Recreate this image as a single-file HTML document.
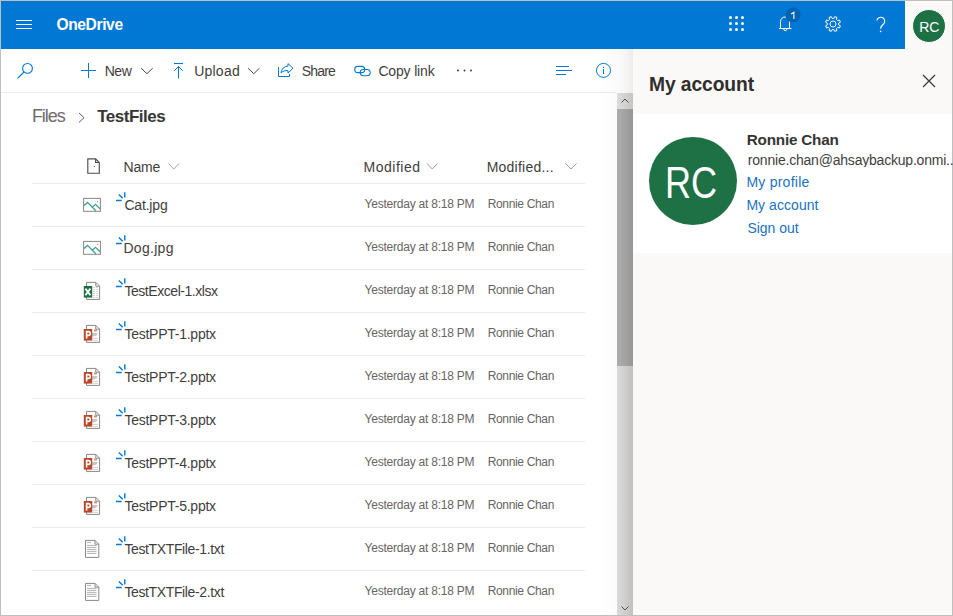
<!DOCTYPE html>
<html><head><meta charset="utf-8">
<style>
html,body{margin:0;padding:0;}
body{width:953px;height:616px;overflow:hidden;position:relative;background:#fff;font-family:"Liberation Sans",sans-serif;}
.t{position:absolute;white-space:nowrap;}
.a{position:absolute;}
svg{position:absolute;overflow:visible;}
</style></head><body>
<div class=a style="left:0;top:0;width:905px;height:49px;background:#0078d4"></div>
<div class=a style="left:905px;top:0;width:48px;height:49px;background:#faf9f8"></div>
<div class=a style="left:0;top:92px;width:617px;height:1px;background:#edebe9"></div>
<div class=a style="left:32px;top:183px;width:553px;height:1px;background:#edebe9"></div>
<div class=a style="left:32px;top:226px;width:553px;height:1px;background:#edebe9"></div>
<div class=a style="left:32px;top:269px;width:553px;height:1px;background:#edebe9"></div>
<div class=a style="left:32px;top:312px;width:553px;height:1px;background:#edebe9"></div>
<div class=a style="left:32px;top:355px;width:553px;height:1px;background:#edebe9"></div>
<div class=a style="left:32px;top:398px;width:553px;height:1px;background:#edebe9"></div>
<div class=a style="left:32px;top:441px;width:553px;height:1px;background:#edebe9"></div>
<div class=a style="left:32px;top:484px;width:553px;height:1px;background:#edebe9"></div>
<div class=a style="left:32px;top:527px;width:553px;height:1px;background:#edebe9"></div>
<div class=a style="left:32px;top:570px;width:553px;height:1px;background:#edebe9"></div>
<div class=a style="left:617px;top:93px;width:16px;height:523px;background:linear-gradient(90deg,#dedede,#cfcfcf)"></div>
<div class=a style="left:617px;top:93px;width:16px;height:16px;background:linear-gradient(90deg,#e0e0e0,#d3d3d3)"></div>
<div class=a style="left:617px;top:109px;width:16px;height:257px;background:linear-gradient(90deg,#b0b0b0,#a2a2a2)"></div>
<div class=a style="left:599px;top:49px;width:34px;height:567px;background:linear-gradient(90deg,rgba(0,0,0,0),rgba(0,0,0,0.015) 50%,rgba(0,0,0,0.04) 80%,rgba(0,0,0,0.075))"></div>
<div class=a style="left:633px;top:49px;width:320px;height:567px;background:#faf9f8"></div>
<div class=a style="left:633px;top:114px;width:320px;height:139px;background:#fff"></div>
<div class=a style="left:649px;top:137px;width:88px;height:88px;border-radius:50%;background:#1e7145"></div>
<div class=a style="left:912px;top:9px;width:32px;height:32px;border-radius:50%;background:#1e7145;border:1px solid #fff"></div>
<svg width="953" height="616" style="left:0;top:0"><line x1="16" y1="20.5" x2="32" y2="20.5" stroke="#fff" stroke-width="1"/>
<line x1="16" y1="24.5" x2="32" y2="24.5" stroke="#fff" stroke-width="1"/>
<line x1="16" y1="28.5" x2="32" y2="28.5" stroke="#fff" stroke-width="1"/>
<circle cx="730.5" cy="17.5" r="1.5" fill="#fff"/>
<circle cx="730.5" cy="23.5" r="1.5" fill="#fff"/>
<circle cx="730.5" cy="29.5" r="1.5" fill="#fff"/>
<circle cx="736.5" cy="17.5" r="1.5" fill="#fff"/>
<circle cx="736.5" cy="23.5" r="1.5" fill="#fff"/>
<circle cx="736.5" cy="29.5" r="1.5" fill="#fff"/>
<circle cx="742.5" cy="17.5" r="1.5" fill="#fff"/>
<circle cx="742.5" cy="23.5" r="1.5" fill="#fff"/>
<circle cx="742.5" cy="29.5" r="1.5" fill="#fff"/>
<path d="M780.5,28.5 V21.5 A4.5,4.5 0 0 1 789.5,21.5 V28.5" fill="none" stroke="#fff" stroke-width="1"/>
<line x1="779" y1="28.5" x2="791.5" y2="28.5" stroke="#fff" stroke-width="1"/>
<path d="M783.7,29 A1.6,1.6 0 0 0 786.9,29" fill="none" stroke="#fff" stroke-width="1"/>
<circle cx="793" cy="15" r="7.6" fill="#0063b1"/>
<path d="M791.2,14 L793.9,12.3 V19.1" fill="none" stroke="#fff" stroke-width="1.1"/>
<path d="M833.85,18.36 L834.78,16.61 L836.97,17.52 L836.39,19.42 L837.58,20.61 L839.48,20.03 L840.39,22.22 L838.64,23.15 L838.64,24.85 L840.39,25.78 L839.48,27.97 L837.58,27.39 L836.39,28.58 L836.97,30.48 L834.78,31.39 L833.85,29.64 L832.15,29.64 L831.22,31.39 L829.03,30.48 L829.61,28.58 L828.42,27.39 L826.52,27.97 L825.61,25.78 L827.36,24.85 L827.36,23.15 L825.61,22.22 L826.52,20.03 L828.42,20.61 L829.61,19.42 L829.03,17.52 L831.22,16.61 L832.15,18.36Z" fill="none" stroke="#fff" stroke-width="1"/>
<circle cx="833" cy="24" r="3" fill="none" stroke="#fff" stroke-width="1"/>
<path d="M876.8,20.5 A4,4 0 1 1 883.8,23.8 C881.5,25.5 880.6,26.3 880.6,28.8" fill="none" stroke="#fff" stroke-width="1.1"/>
<circle cx="880.6" cy="31.4" r="0.8" fill="#fff"/>
<circle cx="27.5" cy="68.4" r="4.9" fill="none" stroke="#0078d4" stroke-width="1.1"/>
<line x1="17.6" y1="78.4" x2="24" y2="72" stroke="#0078d4" stroke-width="1.1"/>
<path d="M81,70.5 H96 M88.5,63 V78" stroke="#0078d4" stroke-width="1"/>
<path d="M141.2,68.2 L146.95,73.7 L152.7,68.2" fill="none" stroke="#484644" stroke-width="1"/>
<path d="M248,68.2 L253.75,73.7 L259.5,68.2" fill="none" stroke="#484644" stroke-width="1"/>
<path d="M174,63.5 H183 M178.5,66.5 V78.5 M174.3,70.7 L178.5,66.5 L182.7,70.7" fill="none" stroke="#0078d4" stroke-width="1"/>
<path d="M278.5,67 V76.5 H289.5 V74" fill="none" stroke="#0078d4" stroke-width="1"/>
<path d="M288,63.6 L293,68.3 L288,73.1 V70.6 C285,70.4 282.8,71.2 281,72.8 C281.5,69 284,66.3 288,66 Z" fill="none" stroke="#0078d4" stroke-width="1" stroke-linejoin="round"/>
<rect x="354.7" y="66.4" width="10" height="6.2" rx="3.1" fill="none" stroke="#0078d4" stroke-width="1.1"/>
<rect x="360.2" y="69.5" width="10" height="6.2" rx="3.1" fill="none" stroke="#0078d4" stroke-width="1.1"/>
<circle cx="458" cy="70.5" r="0.9" fill="#323130"/>
<circle cx="464.5" cy="70.5" r="0.9" fill="#323130"/>
<circle cx="471" cy="70.5" r="0.9" fill="#323130"/>
<path d="M556,66.5 H569 M556,70.5 H572 M556,74.5 H566" stroke="#0078d4" stroke-width="1"/>
<circle cx="603.5" cy="70.4" r="7" fill="none" stroke="#0078d4" stroke-width="1"/>
<circle cx="603.5" cy="67.2" r="0.7" fill="#0078d4"/>
<line x1="603.5" y1="68.9" x2="603.5" y2="74" stroke="#0078d4" stroke-width="1"/>
<path d="M79,113 L84,117.7 L79,122.4" fill="none" stroke="#605e5c" stroke-width="1"/>
<path d="M87.8,158.8 H95.6 L99.3,162.5 V173.2 H87.8 Z M95.6,158.8 V162.5 H99.3" fill="none" stroke="#504e4c" stroke-width="1.15"/>
<circle cx="94.4" cy="166.5" r="0.6" fill="#605e5c"/>
<path d="M168.5,163.5 L173.75,169.0 L179.0,163.5" fill="none" stroke="#a19f9d" stroke-width="1"/>
<path d="M427,163.5 L432.25,169.0 L437.5,163.5" fill="none" stroke="#a19f9d" stroke-width="1"/>
<path d="M565.5,163.5 L571.0,169.0 L576.5,163.5" fill="none" stroke="#a19f9d" stroke-width="1"/>
<path d="M124.8,192.2 V197.4 M118.8,194.5 L122.7,198.3 M116,200.5 H121.7" stroke="#0078d4" stroke-width="1.4"/>
<rect x="83.6" y="198.4" width="16.8" height="12.9" fill="none" stroke="#8a8886" stroke-width="1"/>
<path d="M84,205.6 L87.5,202.4 L95.8,210.7 M92.6,207 L95.5,204.3 L100,208.8" fill="none" stroke="#3f9f99" stroke-width="1.3"/>
<circle cx="97.5" cy="201.4" r="0.6" fill="#e8825a"/>
<path d="M124.8,235.2 V240.4 M118.8,237.5 L122.7,241.3 M116,243.5 H121.7" stroke="#0078d4" stroke-width="1.4"/>
<rect x="83.6" y="241.4" width="16.8" height="12.9" fill="none" stroke="#8a8886" stroke-width="1"/>
<path d="M84,248.6 L87.5,245.4 L95.8,253.7 M92.6,250 L95.5,247.3 L100,251.8" fill="none" stroke="#3f9f99" stroke-width="1.3"/>
<circle cx="97.5" cy="244.4" r="0.6" fill="#e8825a"/>
<path d="M124.8,278.2 V283.4 M118.8,280.5 L122.7,284.3 M116,286.5 H121.7" stroke="#0078d4" stroke-width="1.4"/>
<path d="M86.5,282.4 H95.8 L99.6,286.2 V299.4 H86.5 Z M95.8,282.4 V286.2 H99.6" fill="#fff" stroke="#8a8886" stroke-width="1"/>
<path d="M93,287.4 H95 M96,287.4 H98 M93,289.4 H95 M96,289.4 H98 M93,291.4 H95 M96,291.4 H98 M93,293.4 H95 M96,293.4 H98 M93,295.4 H95 M96,295.4 H98 M93,297.4 H95 M96,297.4 H98" stroke="#c8c6c4" stroke-width="0.8"/>
<rect x="83.8" y="286.0" width="8.4" height="11.6" fill="#1d6f42"/>
<path d="M85.4,288.59999999999997 L90.4,295.2 M90.4,288.59999999999997 L85.4,295.2" stroke="#fff" stroke-width="1.9"/>
<path d="M124.8,321.2 V326.4 M118.8,323.5 L122.7,327.3 M116,329.5 H121.7" stroke="#0078d4" stroke-width="1.4"/>
<path d="M86.5,325.4 H95.8 L99.6,329.2 V342.4 H86.5 Z M95.8,325.4 V329.2 H99.6" fill="#fff" stroke="#8a8886" stroke-width="1"/>
<path d="M94,329.4 H97 V331.4 H94 Z" fill="#ed8a63"/>
<path d="M92,332.9 H97.5 C97.5,335.4 95,336.4 92,336.4 Z" fill="#c8c6c4"/>
<path d="M92.5,338.4 H98 M92.5,340.4 H98" stroke="#c8c6c4" stroke-width="0.8"/>
<rect x="83.8" y="329.0" width="8.4" height="11.6" fill="#b9472a"/>
<path d="M86.6,338.4 V331.59999999999997 H88.4 A1.9,1.9 0 0 1 88.4,335.4 H86.6" fill="none" stroke="#fff" stroke-width="1.6"/>
<path d="M124.8,364.2 V369.4 M118.8,366.5 L122.7,370.3 M116,372.5 H121.7" stroke="#0078d4" stroke-width="1.4"/>
<path d="M86.5,368.4 H95.8 L99.6,372.2 V385.4 H86.5 Z M95.8,368.4 V372.2 H99.6" fill="#fff" stroke="#8a8886" stroke-width="1"/>
<path d="M94,372.4 H97 V374.4 H94 Z" fill="#ed8a63"/>
<path d="M92,375.9 H97.5 C97.5,378.4 95,379.4 92,379.4 Z" fill="#c8c6c4"/>
<path d="M92.5,381.4 H98 M92.5,383.4 H98" stroke="#c8c6c4" stroke-width="0.8"/>
<rect x="83.8" y="372.0" width="8.4" height="11.6" fill="#b9472a"/>
<path d="M86.6,381.4 V374.59999999999997 H88.4 A1.9,1.9 0 0 1 88.4,378.4 H86.6" fill="none" stroke="#fff" stroke-width="1.6"/>
<path d="M124.8,407.2 V412.4 M118.8,409.5 L122.7,413.3 M116,415.5 H121.7" stroke="#0078d4" stroke-width="1.4"/>
<path d="M86.5,411.4 H95.8 L99.6,415.2 V428.4 H86.5 Z M95.8,411.4 V415.2 H99.6" fill="#fff" stroke="#8a8886" stroke-width="1"/>
<path d="M94,415.4 H97 V417.4 H94 Z" fill="#ed8a63"/>
<path d="M92,418.9 H97.5 C97.5,421.4 95,422.4 92,422.4 Z" fill="#c8c6c4"/>
<path d="M92.5,424.4 H98 M92.5,426.4 H98" stroke="#c8c6c4" stroke-width="0.8"/>
<rect x="83.8" y="415.0" width="8.4" height="11.6" fill="#b9472a"/>
<path d="M86.6,424.4 V417.59999999999997 H88.4 A1.9,1.9 0 0 1 88.4,421.4 H86.6" fill="none" stroke="#fff" stroke-width="1.6"/>
<path d="M124.8,450.2 V455.4 M118.8,452.5 L122.7,456.3 M116,458.5 H121.7" stroke="#0078d4" stroke-width="1.4"/>
<path d="M86.5,454.4 H95.8 L99.6,458.2 V471.4 H86.5 Z M95.8,454.4 V458.2 H99.6" fill="#fff" stroke="#8a8886" stroke-width="1"/>
<path d="M94,458.4 H97 V460.4 H94 Z" fill="#ed8a63"/>
<path d="M92,461.9 H97.5 C97.5,464.4 95,465.4 92,465.4 Z" fill="#c8c6c4"/>
<path d="M92.5,467.4 H98 M92.5,469.4 H98" stroke="#c8c6c4" stroke-width="0.8"/>
<rect x="83.8" y="458.0" width="8.4" height="11.6" fill="#b9472a"/>
<path d="M86.6,467.4 V460.59999999999997 H88.4 A1.9,1.9 0 0 1 88.4,464.4 H86.6" fill="none" stroke="#fff" stroke-width="1.6"/>
<path d="M124.8,493.2 V498.4 M118.8,495.5 L122.7,499.3 M116,501.5 H121.7" stroke="#0078d4" stroke-width="1.4"/>
<path d="M86.5,497.4 H95.8 L99.6,501.2 V514.4 H86.5 Z M95.8,497.4 V501.2 H99.6" fill="#fff" stroke="#8a8886" stroke-width="1"/>
<path d="M94,501.4 H97 V503.4 H94 Z" fill="#ed8a63"/>
<path d="M92,504.9 H97.5 C97.5,507.4 95,508.4 92,508.4 Z" fill="#c8c6c4"/>
<path d="M92.5,510.4 H98 M92.5,512.4 H98" stroke="#c8c6c4" stroke-width="0.8"/>
<rect x="83.8" y="501.0" width="8.4" height="11.6" fill="#b9472a"/>
<path d="M86.6,510.4 V503.59999999999997 H88.4 A1.9,1.9 0 0 1 88.4,507.4 H86.6" fill="none" stroke="#fff" stroke-width="1.6"/>
<path d="M124.8,536.2 V541.4 M118.8,538.5 L122.7,542.3 M116,544.5 H121.7" stroke="#0078d4" stroke-width="1.4"/>
<path d="M85.5,540.4 H95.0 L98.8,544.1999999999999 V557.4 H85.5 Z M95.0,540.4 V544.1999999999999 H98.8" fill="#fff" stroke="#8a8886" stroke-width="1"/>
<path d="M87,542.4 H91 M87,545.4 H96.5 M87,547.4 H96.5 M87,549.4 H96.5 M87,551.4 H96.5 M87,553.4 H96.5" stroke="#a19f9d" stroke-width="0.8"/>
<path d="M124.8,579.2 V584.4 M118.8,581.5 L122.7,585.3 M116,587.5 H121.7" stroke="#0078d4" stroke-width="1.4"/>
<path d="M85.5,583.4 H95.0 L98.8,587.1999999999999 V600.4 H85.5 Z M95.0,583.4 V587.1999999999999 H98.8" fill="#fff" stroke="#8a8886" stroke-width="1"/>
<path d="M87,585.4 H91 M87,588.4 H96.5 M87,590.4 H96.5 M87,592.4 H96.5 M87,594.4 H96.5 M87,596.4 H96.5" stroke="#a19f9d" stroke-width="0.8"/>
<path d="M923,75 L935,87 M935,75 L923,87" stroke="#3b3a39" stroke-width="1.3"/>
<path d="M621.5,102.5 L625,99 L628.5,102.5" fill="none" stroke="#505050" stroke-width="1"/>
<path d="M621.5,606.5 L625,610 L628.5,606.5" fill="none" stroke="#505050" stroke-width="1"/></svg>
<div class=a style="left:0;top:0;width:951px;height:614px;border:1px solid #bfbfbf"></div>
<div class=t style="left:56.40px;top:16.99px;font-size:15.6px;line-height:15.6px;color:#fff;font-weight:700;letter-spacing:-0.380px;">OneDrive</div>
<div class=t style="left:919.20px;top:20.15px;font-size:14px;line-height:14px;color:#fff;">RC</div>
<div class=t style="left:104.70px;top:64.15px;font-size:14px;line-height:14px;color:#3f3e3d;letter-spacing:-0.448px;">New</div>
<div class=t style="left:194.20px;top:64.15px;font-size:14px;line-height:14px;color:#3f3e3d;letter-spacing:0.224px;">Upload</div>
<div class=t style="left:301.70px;top:64.15px;font-size:14px;line-height:14px;color:#3f3e3d;letter-spacing:-0.818px;">Share</div>
<div class=t style="left:378.40px;top:64.15px;font-size:14px;line-height:14px;color:#3f3e3d;letter-spacing:-0.160px;">Copy link</div>
<div class=t style="left:31.90px;top:106.96px;font-size:18px;line-height:18px;color:#6e6c6b;letter-spacing:-1.026px;">Files</div>
<div class=t style="left:97.20px;top:107.71px;font-size:17px;line-height:17px;color:#363534;font-weight:700;letter-spacing:-0.497px;">TestFiles</div>
<div class=t style="left:123.50px;top:160.15px;font-size:14px;line-height:14px;color:#3f3e3d;letter-spacing:-0.153px;">Name</div>
<div class=t style="left:363.60px;top:160.15px;font-size:14px;line-height:14px;color:#3f3e3d;letter-spacing:0.496px;">Modified</div>
<div class=t style="left:486.70px;top:160.15px;font-size:14px;line-height:14px;color:#3f3e3d;letter-spacing:0.230px;">Modified...</div>
<div class=t style="left:124.40px;top:198.15px;font-size:14px;line-height:14px;color:#3f3e3d;letter-spacing:-0.179px;">Cat.jpg</div>
<div class=t style="left:364.60px;top:197.84px;font-size:12px;line-height:12px;color:#676564;letter-spacing:-0.226px;">Yesterday at 8:18 PM</div>
<div class=t style="left:487.70px;top:197.84px;font-size:12px;line-height:12px;color:#676564;letter-spacing:-0.338px;">Ronnie Chan</div>
<div class=t style="left:123.40px;top:241.15px;font-size:14px;line-height:14px;color:#3f3e3d;letter-spacing:0.305px;">Dog.jpg</div>
<div class=t style="left:364.60px;top:240.84px;font-size:12px;line-height:12px;color:#676564;letter-spacing:-0.226px;">Yesterday at 8:18 PM</div>
<div class=t style="left:487.70px;top:240.84px;font-size:12px;line-height:12px;color:#676564;letter-spacing:-0.338px;">Ronnie Chan</div>
<div class=t style="left:124.40px;top:284.15px;font-size:14px;line-height:14px;color:#3f3e3d;letter-spacing:-0.444px;">TestExcel-1.xlsx</div>
<div class=t style="left:364.60px;top:283.84px;font-size:12px;line-height:12px;color:#676564;letter-spacing:-0.226px;">Yesterday at 8:18 PM</div>
<div class=t style="left:487.70px;top:283.84px;font-size:12px;line-height:12px;color:#676564;letter-spacing:-0.338px;">Ronnie Chan</div>
<div class=t style="left:124.40px;top:327.15px;font-size:14px;line-height:14px;color:#3f3e3d;letter-spacing:-0.249px;">TestPPT-1.pptx</div>
<div class=t style="left:364.60px;top:326.84px;font-size:12px;line-height:12px;color:#676564;letter-spacing:-0.226px;">Yesterday at 8:18 PM</div>
<div class=t style="left:487.70px;top:326.84px;font-size:12px;line-height:12px;color:#676564;letter-spacing:-0.338px;">Ronnie Chan</div>
<div class=t style="left:124.40px;top:370.15px;font-size:14px;line-height:14px;color:#3f3e3d;letter-spacing:-0.249px;">TestPPT-2.pptx</div>
<div class=t style="left:364.60px;top:369.84px;font-size:12px;line-height:12px;color:#676564;letter-spacing:-0.226px;">Yesterday at 8:18 PM</div>
<div class=t style="left:487.70px;top:369.84px;font-size:12px;line-height:12px;color:#676564;letter-spacing:-0.338px;">Ronnie Chan</div>
<div class=t style="left:124.40px;top:413.15px;font-size:14px;line-height:14px;color:#3f3e3d;letter-spacing:-0.249px;">TestPPT-3.pptx</div>
<div class=t style="left:364.60px;top:412.84px;font-size:12px;line-height:12px;color:#676564;letter-spacing:-0.226px;">Yesterday at 8:18 PM</div>
<div class=t style="left:487.70px;top:412.84px;font-size:12px;line-height:12px;color:#676564;letter-spacing:-0.338px;">Ronnie Chan</div>
<div class=t style="left:124.40px;top:456.15px;font-size:14px;line-height:14px;color:#3f3e3d;letter-spacing:-0.249px;">TestPPT-4.pptx</div>
<div class=t style="left:364.60px;top:455.84px;font-size:12px;line-height:12px;color:#676564;letter-spacing:-0.226px;">Yesterday at 8:18 PM</div>
<div class=t style="left:487.70px;top:455.84px;font-size:12px;line-height:12px;color:#676564;letter-spacing:-0.338px;">Ronnie Chan</div>
<div class=t style="left:124.40px;top:499.15px;font-size:14px;line-height:14px;color:#3f3e3d;letter-spacing:-0.249px;">TestPPT-5.pptx</div>
<div class=t style="left:364.60px;top:498.84px;font-size:12px;line-height:12px;color:#676564;letter-spacing:-0.226px;">Yesterday at 8:18 PM</div>
<div class=t style="left:487.70px;top:498.84px;font-size:12px;line-height:12px;color:#676564;letter-spacing:-0.338px;">Ronnie Chan</div>
<div class=t style="left:124.40px;top:542.15px;font-size:14px;line-height:14px;color:#3f3e3d;letter-spacing:-0.369px;">TestTXTFile-1.txt</div>
<div class=t style="left:364.60px;top:541.84px;font-size:12px;line-height:12px;color:#676564;letter-spacing:-0.226px;">Yesterday at 8:18 PM</div>
<div class=t style="left:487.70px;top:541.84px;font-size:12px;line-height:12px;color:#676564;letter-spacing:-0.338px;">Ronnie Chan</div>
<div class=t style="left:124.40px;top:585.15px;font-size:14px;line-height:14px;color:#3f3e3d;letter-spacing:-0.369px;">TestTXTFile-2.txt</div>
<div class=t style="left:364.60px;top:584.84px;font-size:12px;line-height:12px;color:#676564;letter-spacing:-0.226px;">Yesterday at 8:18 PM</div>
<div class=t style="left:487.70px;top:584.84px;font-size:12px;line-height:12px;color:#676564;letter-spacing:-0.338px;">Ronnie Chan</div>
<div class=t style="left:649.00px;top:74.66px;font-size:19.3px;line-height:19.3px;color:#2f2e2d;font-weight:700;letter-spacing:-0.105px;">My account</div>
<div class=t style="left:746.80px;top:132.05px;font-size:15.3px;line-height:15.3px;color:#363534;font-weight:700;letter-spacing:-0.228px;">Ronnie Chan</div>
<div class=t style="left:747.80px;top:152.55px;font-size:14px;line-height:14px;color:#3f3e3d;letter-spacing:-0.207px;width:205px;overflow:hidden;">ronnie.chan@ahsaybackup.onmi..</div>
<div class=t style="left:746.40px;top:175.15px;font-size:14px;line-height:14px;color:#1a72c2;letter-spacing:0.245px;">My profile</div>
<div class=t style="left:746.40px;top:197.95px;font-size:14px;line-height:14px;color:#1a72c2;letter-spacing:0.056px;">My account</div>
<div class=t style="left:747.40px;top:220.65px;font-size:14px;line-height:14px;color:#1a72c2;letter-spacing:-0.026px;">Sign out</div>
<div class=t style="left:664.50px;top:160.75px;font-size:44px;line-height:44px;color:#fff;transform:scaleX(0.82);transform-origin:0 0;">RC</div>
</body></html>
